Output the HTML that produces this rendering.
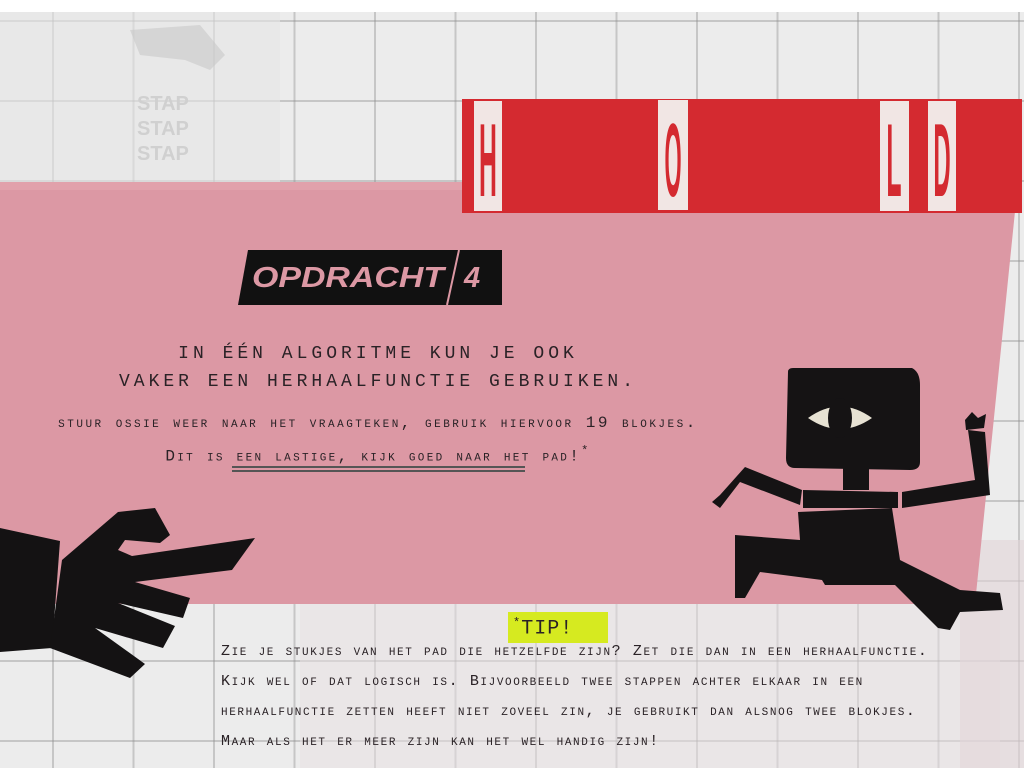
<!DOCTYPE html>
<html><head><meta charset="utf-8"><style>
*{margin:0;padding:0;box-sizing:border-box}
body{width:1024px;height:768px;overflow:hidden;position:relative;background:#ececec;font-family:"Liberation Mono",monospace;color:#2a2226}
.grid{position:absolute;inset:0;background-image:linear-gradient(90deg,rgba(140,140,140,.4) 2px,transparent 2px),linear-gradient(rgba(140,140,140,.4) 2px,transparent 2px);background-size:80.5px 80px;background-position:52px 20px}
.top{position:absolute;left:0;top:0;width:1024px;height:12px;background:#fff}
.abs{position:absolute}
.t{position:absolute;left:0;width:756px;text-align:center;white-space:nowrap}
.tip{position:absolute;left:221px;font-size:15px;font-variant:small-caps;letter-spacing:1.6px;white-space:nowrap}
</style></head><body>
<div class="grid"></div>
<div class="top"></div>
<svg class="abs" style="left:0;top:0" width="1024" height="768">
 <rect x="0" y="12" width="280" height="170" fill="#e6e6e6" opacity=".6"/>
 <path d="M130 30 L200 25 L225 55 L210 70 L185 60 L140 55Z" fill="#c8c8c8" opacity=".6"/>
 <g font-family="Liberation Sans" font-weight="bold" font-size="20" fill="#d0d0d0"><text x="137" y="110">STAP</text><text x="137" y="135">STAP</text><text x="137" y="160">STAP</text></g>
 <rect x="300" y="604" width="700" height="164" fill="#e8e0e2" opacity=".5"/>
 <rect x="960" y="540" width="64" height="228" fill="#e3d5d8" opacity=".6"/>
 <polygon points="0,182 1018,182 975,604 0,604" fill="#dc98a4"/>
 <rect x="0" y="182" width="1018" height="8" fill="#e4a7b1" opacity=".6"/>
 <rect x="462" y="99" width="560" height="114" fill="#d42a30"/>
 <g fill="#f1e6e4"><rect x="474" y="101" width="28" height="110"/><rect x="658" y="100" width="30" height="110"/><rect x="880" y="101" width="29" height="110"/><rect x="928" y="101" width="28" height="110"/></g>
 <g font-family="Liberation Sans" font-weight="bold" fill="#d42a30" font-size="40" text-anchor="middle">
  <text transform="translate(488,196) scale(0.62,2.6)">H</text>
  <text transform="translate(673,196) scale(0.55,2.6)">O</text>
  <text transform="translate(894,196) scale(0.62,2.6)">L</text>
  <text transform="translate(942,196) scale(0.6,2.6)">D</text>
 </g>
 <polygon points="248,250 502,250 502,305 238,305" fill="#111"/>
 <line x1="459" y1="250" x2="447" y2="305" stroke="#dc98a4" stroke-width="2"/>
 <g font-family="Liberation Sans" font-weight="bold" font-style="italic" fill="#dc98a4" font-size="29"><text x="252" y="287" textLength="192" lengthAdjust="spacingAndGlyphs">OPDRACHT</text><text x="464" y="287">4</text></g>
 <g fill="#141213">
  <polygon points="0,528 60,541 52,648 0,652"/>
  <polygon points="62,560 118,512 155,508 170,535 160,543 125,540 118,550 132,556 255,538 232,570 135,582 190,598 183,618 118,603 175,626 163,648 95,628 145,664 130,678 50,648"/>
 </g>
 <g fill="#151314">
  <path d="M788 372 Q788 368 793 368 L912 368 Q920 372 920 385 L920 462 Q920 470 910 470 L795 468 Q786 468 786 458Z"/>
  <rect x="843" y="468" width="26" height="22"/>
  <polygon points="803,490 898,492 898,508 803,508"/>
  <polygon points="902,492 975,480 968,430 985,432 990,495 902,508"/>
  <polygon points="965,420 972,412 978,418 986,414 984,428 966,430"/>
  <polygon points="802,490 745,467 720,495 712,502 720,508 740,482 800,505"/>
  <polygon points="798,512 892,508 900,560 960,590 1000,593 1003,610 960,612 950,630 938,628 895,585 825,585 822,580 760,572 745,598 735,598 735,535 800,540"/>
 </g>
 <path d="M808 418 Q840 395 872 418 Q840 440 808 418Z" fill="#e7e2d3"/>
 <ellipse cx="840" cy="418" rx="12" ry="20" fill="#151314"/>
 <rect x="508" y="612" width="100" height="31" fill="#d6ea20"/>
</svg>
<div class="t" style="top:344px;font-size:18px;letter-spacing:4px">IN ÉÉN ALGORITME KUN JE OOK</div>
<div class="t" style="top:372px;font-size:18px;letter-spacing:4px">VAKER EEN HERHAALFUNCTIE GEBRUIKEN.</div>
<div class="t" style="top:414px;font-size:16px;letter-spacing:2.5px;font-variant:small-caps">stuur ossie weer naar het vraagteken, gebruik hiervoor 19 blokjes.</div>
<div class="t" style="top:444px;font-size:16px;letter-spacing:2.3px;font-variant:small-caps">Dit is een lastige, kijk goed naar het pad!<sup style="font-size:12px">*</sup></div>
<div class="abs" style="left:232px;top:466px;width:293px;height:6px;border-top:2px solid #555;border-bottom:2px solid #555"></div>
<div class="abs" style="left:513px;top:616px;font-size:20px;letter-spacing:1px"><sup style="font-size:12px">*</sup>TIP!</div>
<div class="tip" style="top:643px">Zie je stukjes van het pad die hetzelfde zijn? Zet die dan in een herhaalfunctie.</div>
<div class="tip" style="top:673px">Kijk wel of dat logisch is. Bijvoorbeeld twee stappen achter elkaar in een</div>
<div class="tip" style="top:703px">herhaalfunctie zetten heeft niet zoveel zin, je gebruikt dan alsnog twee blokjes.</div>
<div class="tip" style="top:733px">Maar als het er meer zijn kan het wel handig zijn!</div>
</body></html>
